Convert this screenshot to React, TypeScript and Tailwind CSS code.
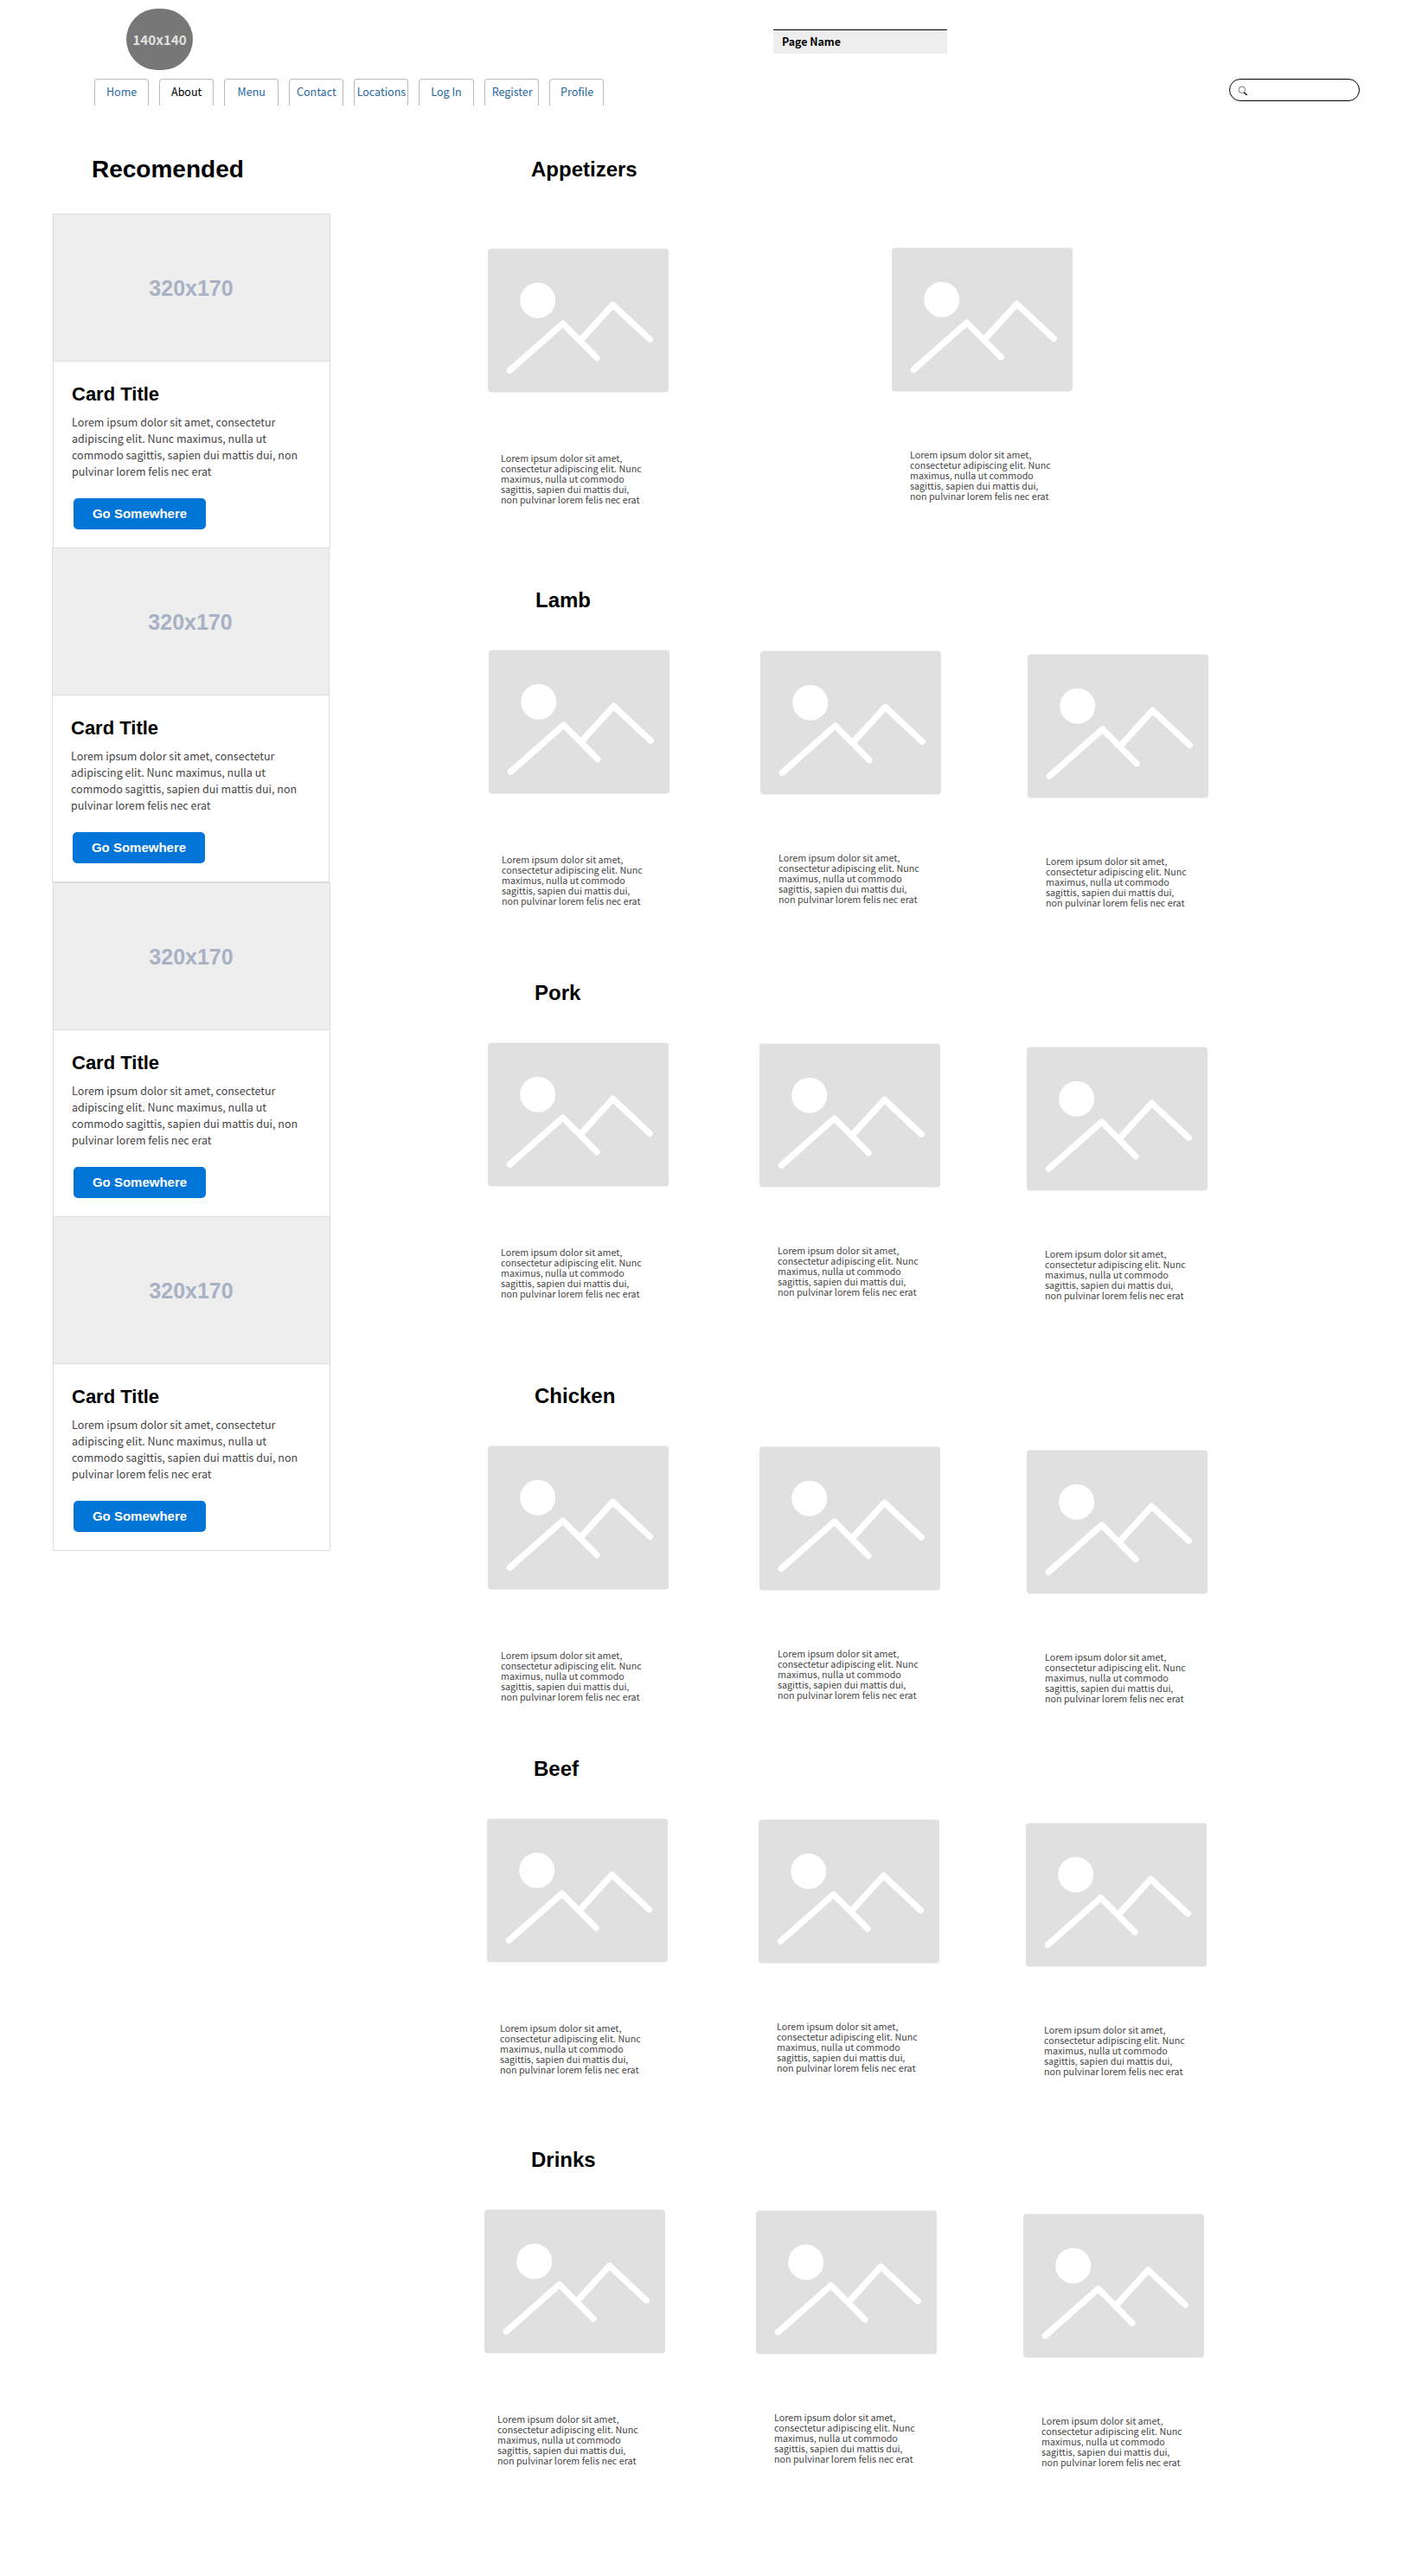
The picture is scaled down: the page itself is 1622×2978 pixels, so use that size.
const body = "font-['Noto_Sans_CJK_SC','Noto_Sans',sans-serif]";
const heading = "font-['Liberation_Sans',Arial,sans-serif] font-bold text-black";

const tabs = [
  { label: 'Home', className: 'text-[#2468a2]' },
  { label: 'About', className: 'text-black' },
  { label: 'Menu', className: 'text-[#2468a2]' },
  { label: 'Contact', className: 'text-[#2468a2]' },
  { label: 'Locations', className: 'text-[#2468a2]' },
  { label: 'Log In', className: 'text-[#2468a2]' },
  { label: 'Register', className: 'pl-[2px] text-[#2468a2]' },
  { label: 'Profile', className: 'pl-[2px] text-[#2468a2]' },
];

function Header() {
  return (
    <header className={`h-[122px] ${body}`}>
      <div className="flex h-[91px] items-start">
        <div className="mt-[10px] ml-[146px] flex h-[71px] w-[77px] items-center justify-center rounded-full bg-[#777] text-[15.3px] font-bold text-[#e0e0e0]">
          140x140
        </div>
        <div className="mt-[34px] ml-[671px] h-[28px] w-[201px] border-t border-black bg-[#eee] pl-[10px] text-[12.4px] leading-[27px] font-bold text-black">
          Page Name
        </div>
      </div>
      <div className="flex items-start">
        <nav className="ml-[109px] flex gap-[12px]">
          {tabs.map((t) => (
            <a
              key={t.label}
              className={`flex h-[31px] w-[63.1px] justify-center rounded-t-[4px] border border-b-0 border-[#bbb] text-[12.5px] leading-[27px] whitespace-nowrap ${t.className}`}
            >
              {t.label}
            </a>
          ))}
        </nav>
        <div className="ml-[723px] h-[26px] w-[151px] rounded-[13px] border border-black pt-[6.5px] pl-[9px]">
          <svg width="12" height="12" viewBox="0 0 12 12" fill="none">
            <circle cx="4.8" cy="4.8" r="3.8" stroke="#555" strokeWidth="0.8" />
            <path d="M7.2 7.8L10.6 11" stroke="#111" strokeWidth="1.5" />
          </svg>
        </div>
      </div>
    </header>
  );
}

function Card({ className }: { className: string }) {
  return (
    <article className={`w-[321px] border border-[#ddd] bg-white ${className}`}>
      <div
        className="flex h-[170px] items-center justify-center border-b border-[#ddd] bg-[#eee] pt-[2px] pr-px font-['Liberation_Sans',Arial,sans-serif] text-[25px] font-bold text-[#a9b1c5]"
      >
        320x170
      </div>
      <div className="pl-[21px]">
        <h3 className={`pt-[25px] text-[22px] leading-[26px] ${heading}`}>Card Title</h3>
        <p className={`mt-[9px] text-[12.5px] leading-[19px] whitespace-nowrap text-[#444] ${body}`}>
          Lorem ipsum dolor sit amet, consectetur
          <br />
          adipiscing elit. Nunc maximus, nulla ut
          <br />
          commodo sagittis, sapien dui mattis dui, non
          <br />
          pulvinar lorem felis nec erat
        </p>
        <button className="mt-[22px] ml-[2px] block h-[36px] w-[153px] rounded-[5px] bg-[#0275d8] pt-px font-['Liberation_Sans',Arial,sans-serif] text-[15px] font-bold text-white">
          Go Somewhere
        </button>
      </div>
    </article>
  );
}

function Dish({ className, textClassName }: { className: string; textClassName: string }) {
  return (
    <div className={`w-[209px] shrink-0 ${className}`}>
      <svg className="block" width="209" height="167" viewBox="0 0 209 167" fill="none">
        <rect y="0.5" width="209" height="166" rx="4" fill="#e0e0e0" />
        <circle cx="57.7" cy="60.3" r="20.5" fill="#fff" />
        <g stroke="#fff" strokeWidth="7.3" strokeLinecap="round" strokeLinejoin="round">
          <path d="M25.3 141.3L86.7 87L126 126.7" />
          <path d="M108.3 105L144.5 65.3L187.3 105.3" />
        </g>
      </svg>
      <p className={`text-[10.72px] leading-[12px] whitespace-nowrap text-[#444] ${body} ${textClassName}`}>
        Lorem ipsum dolor sit amet,
        <br />
        consectetur adipiscing elit. Nunc
        <br />
        maximus, nulla ut commodo
        <br />
        sagittis, sapien dui mattis dui,
        <br />
        non pulvinar lorem felis nec erat
      </p>
    </div>
  );
}

function Section({ title, className }: { title: string; className: string }) {
  return (
    <section className={className}>
      <h2 className={`pl-[54px] text-[24px] leading-[28px] ${heading}`}>{title}</h2>
      <div className="mt-[43px] flex items-start">
        <Dish className="" textClassName="mt-[70px] pl-[15px]" />
        <Dish className="mt-px ml-[105px]" textClassName="mt-[67px] pl-[21px]" />
        <Dish className="mt-[5px] ml-[100px]" textClassName="mt-[67px] pl-[21px]" />
      </div>
    </section>
  );
}

export default function App() {
  return (
    <div className="h-[2978px] w-[1622px] overflow-hidden bg-white">
      <Header />
      <div className="flex">
        <aside className="w-[560px] shrink-0 pl-[61px]">
          <h1 className={`mt-[58px] ml-[45px] text-[28px] leading-[32px] ${heading}`}>Recomended</h1>
          <div className="mt-[35px]">
            <Card className="h-[387px]" />
            <Card className="-mt-px -ml-px h-[387px]" />
            <Card className="h-[387px]" />
            <Card className="-mt-px h-[387px]" />
          </div>
        </aside>
        <main className="pt-[60px]">
          <section className="ml-[4px] h-[498px]">
            <h2 className={`pl-[50px] text-[24px] leading-[28px] ${heading}`}>Appetizers</h2>
            <div className="mt-[76px] flex items-start">
              <Dish className="mt-px" textClassName="mt-[70px] pl-[15px]" />
              <Dish className="ml-[258px]" textClassName="mt-[67px] pl-[21px]" />
            </div>
          </section>
          <Section title="Lamb" className="ml-[5px] h-[454px]" />
          <Section title="Pork" className="ml-[4px] h-[466px]" />
          <Section title="Chicken" className="ml-[4px] h-[431px]" />
          <Section title="Beef" className="ml-[3px] h-[452px]" />
          <Section title="Drinks" className="h-[495px]" />
        </main>
      </div>
    </div>
  );
}
